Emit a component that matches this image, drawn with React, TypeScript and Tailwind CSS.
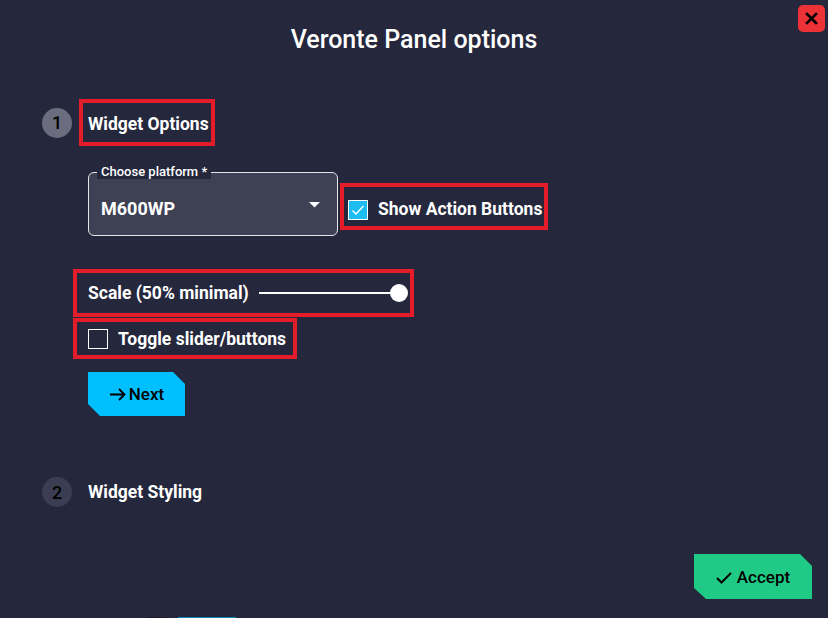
import React from "react";

const ROBOTO = { fontFamily: "Roboto, 'Noto Sans', sans-serif" } as React.CSSProperties;

function StepCircle({ n, active }: { n: number; active?: boolean }) {
  return (
    <div
      className={
        "w-[30px] h-[30px] rounded-full flex items-center justify-center text-[18px] font-medium text-black shrink-0 " +
        (active ? "bg-[#6b6d7f]" : "bg-[#3b3d52]")
      }
    >
      {n}
    </div>
  );
}

export default function App() {
  return (
    <div
      className="w-[828px] h-[618px] bg-[#25273c] relative overflow-hidden text-white flex flex-col"
      style={ROBOTO}
    >
      {/* close button */}
      <button className="absolute top-[5px] left-[798px] w-[27px] h-[27px] rounded-[5px] bg-[#ec3237] flex items-center justify-center">
        <svg width="13" height="13" viewBox="0 0 13 13">
          <path d="M2 2 L11 11 M11 2 L2 11" stroke="#000" strokeWidth="2.6" strokeLinecap="square" />
        </svg>
      </button>

      <h1 className="pt-[24px] text-center text-[25px] leading-[32px] font-medium">
        Veronte Panel options
      </h1>

      {/* Step 1 */}
      <div className="mt-[43px] pl-[42px] flex items-center">
        <StepCircle n={1} active />
        <div className="ml-[7px] w-[136px] h-[47px] border-[4px] border-[#e51d2b] flex items-center pl-[5px] pt-[3px]">
          <span className="text-[17.5px] font-bold whitespace-nowrap">Widget Options</span>
        </div>
      </div>

      <div className="pl-[88px] flex flex-col">
        {/* select + checkbox */}
        <div className="mt-[26px] flex items-start">
          <div className="relative w-[250px] h-[64px] rounded-[6px] border border-[#e6e6ea] bg-[#3e4054] flex items-center pl-[12px]">
            <span className="absolute -top-[8px] left-[8px] px-[4px] bg-[#25273c] text-[13px] leading-[14px] font-medium">
              Choose platform *
            </span>
            <span className="text-[18px] font-bold mt-[8px]">M600WP</span>
            <svg className="absolute right-[17px] top-[29px]" width="11" height="6" viewBox="0 0 11 6">
              <path d="M0 0 H11 L5.5 5.5 Z" fill="#fff" />
            </svg>
          </div>
          <div className="ml-[2px] mt-[11px] w-[208px] h-[47px] border-[4px] border-[#e51d2b] flex items-center pl-[4px] pt-[6px]">
            <div className="w-[20px] h-[20px] border border-white bg-[#1ebdf0] flex items-center justify-center shrink-0">
              <svg width="14" height="12" viewBox="0 0 14 12">
                <path d="M1.5 6.5 L5 10 L12.5 2" stroke="#fff" strokeWidth="1.4" fill="none" />
              </svg>
            </div>
            <span className="ml-[10px] text-[17.5px] font-bold whitespace-nowrap">Show Action Buttons</span>
          </div>
        </div>

        {/* scale */}
        <div className="mt-[33px] -ml-[15px] w-[341px] h-[48px] border-[4px] border-[#e51d2b] flex items-center pl-[11px]">
          <span className="text-[17.5px] font-bold whitespace-nowrap">Scale (50% minimal)</span>
          <div className="ml-[10px] relative w-[149px] h-[18px] flex items-center">
            <div className="w-[140px] h-[2px] bg-white" />
            <div className="absolute right-[0px] top-[0px] w-[18px] h-[18px] rounded-full bg-white" />
          </div>
        </div>

        {/* toggle */}
        <div className="mt-[1px] -ml-[15px] w-[224px] h-[41px] border-[4px] border-[#e51d2b] flex items-center pl-[11px] pt-[1px]">
          <div className="w-[20px] h-[20px] border border-white shrink-0" />
          <span className="ml-[10px] text-[17.5px] font-bold whitespace-nowrap">Toggle slider/buttons</span>
        </div>

        {/* next */}
        <button className="mt-[13px] w-[97px] h-[44px] bg-[#00bffe] text-black flex items-center justify-center gap-[3px] pt-[1px] [clip-path:polygon(0_0,calc(100%-12px)_0,100%_12px,100%_100%,12px_100%,0_calc(100%-12px))]">
          <svg width="17" height="13" viewBox="0 0 17 13">
            <path d="M1 6.5 H15.5 M10 1 L15.5 6.5 L10 12" stroke="#000" strokeWidth="1.8" fill="none" />
          </svg>
          <span className="text-[17px] font-medium">Next</span>
        </button>
      </div>

      {/* Step 2 */}
      <div className="mt-[61px] pl-[42px] flex items-center">
        <StepCircle n={2} />
        <span className="ml-[16px] text-[17.5px] font-bold">Widget Styling</span>
      </div>

      {/* accept */}
      <div className="mt-[47px] flex justify-end pr-[16px]">
        <button className="w-[118px] h-[45px] bg-[#1fca86] text-black flex items-center justify-center gap-[5px] pt-[3px] [clip-path:polygon(0_0,calc(100%-12px)_0,100%_12px,100%_100%,12px_100%,0_calc(100%-11px))]">
          <svg width="16" height="12" viewBox="0 0 16 12">
            <path d="M1 6 L5.5 10.5 L15 1" stroke="#000" strokeWidth="2" fill="none" />
          </svg>
          <span className="text-[17px] font-medium">Accept</span>
        </button>
      </div>

      {/* partial elements at the bottom edge */}
      <div className="absolute left-[148px] bottom-0 w-[19px] h-[1px] bg-[#1a1b2a]" />
      <div className="absolute left-[178px] bottom-0 w-[58px] h-[1px] bg-[#0f86b3]" />
    </div>
  );
}
